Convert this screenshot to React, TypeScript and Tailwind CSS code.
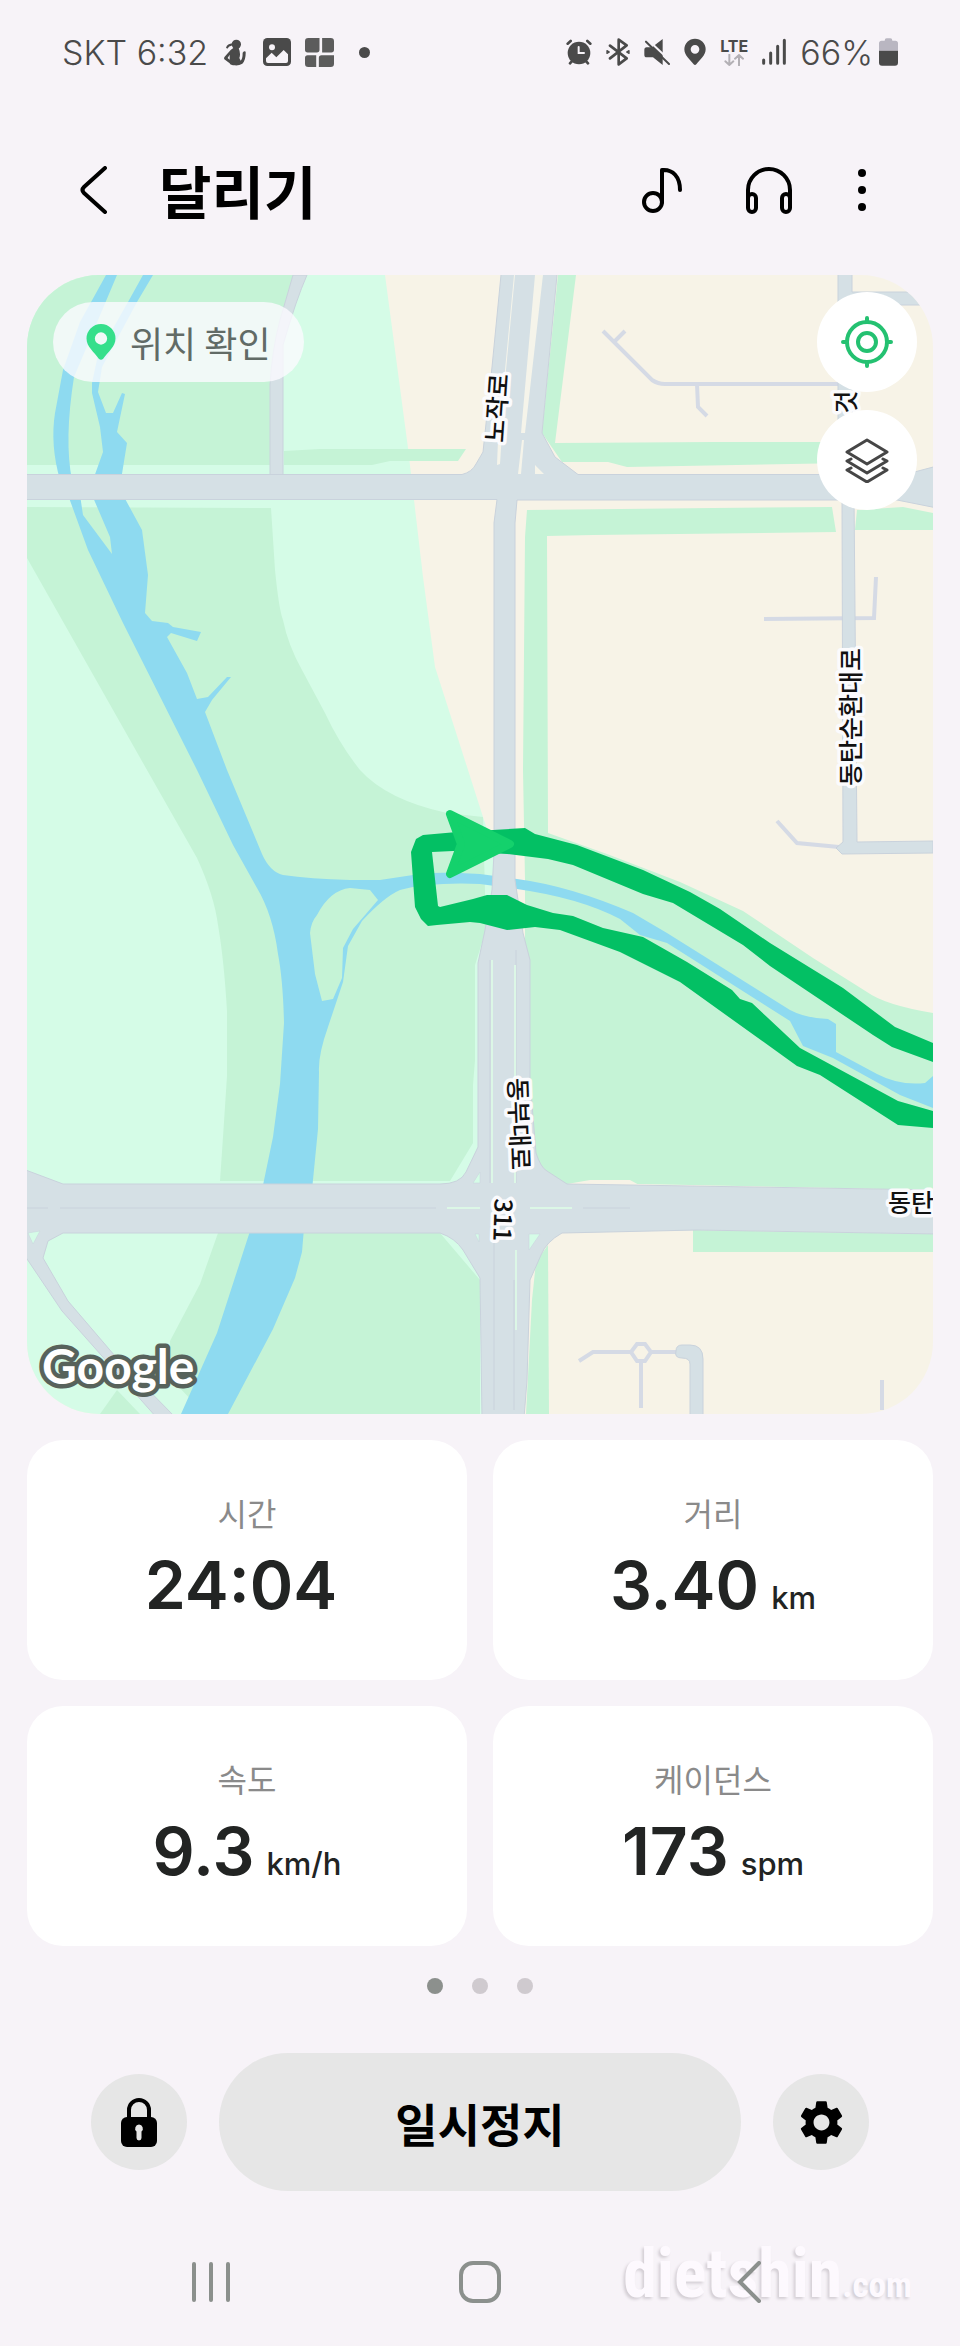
import React from "react";
import { MdSettings } from "react-icons/md";

const stats = [
  { label: "시간", value: "24:04", unit: "" },
  { label: "거리", value: "3.40", unit: "km" },
  { label: "속도", value: "9.3", unit: "km/h" },
  { label: "케이던스", value: "173", unit: "spm" },
];

const roadLabels = [
  { text: "노작로", x: 497, y: 408, angle: -86 },
  { text: "것", x: 846, y: 402, angle: -90 },
  { text: "동탄순환대로", x: 851, y: 717, angle: -90 },
  { text: "동부대로", x: 519, y: 1124, angle: 88 },
  { text: "311", x: 503, y: 1220, angle: 92 },
  { text: "동탄", x: 911, y: 1203, angle: 0 },
];

function StatusBar() {
  return (
    <div className="flex h-[104px] items-center justify-between px-[62px] font-['Inter','Noto_Sans_CJK_KR',sans-serif] text-[34px] font-light text-[#4a4a4a]">
      <div className="flex items-center">
        <span className="mr-4">SKT 6:32</span>
        <svg className="mr-[17px] h-7 w-[22px]" viewBox="0 0 66 84" fill="#4a4a4a">
          <circle cx="37" cy="19" r="14" />
          <path d="M6 29q4-12 20-13l-3 7q-8 0-13 9zM28 30h16q7 18 2 30l4 8q6-6 6-24 5-6 9-3 1 26-10 36-10 6-22 5-14 0-16-6L1 64q-2-4 1-8l18-20zM17 50l-6 10 6 5z" />
        </svg>
        <svg className="mr-[14px] h-7 w-7" viewBox="0 0 84 84">
          <rect width="84" height="84" rx="13" fill="#4a4a4a" />
          <circle cx="27" cy="28" r="9" fill="#f7f3f8" />
          <path d="M9 61 26 44l14 14 22-22 13 13v20q0 6-6 6H15q-6 0-6-6z" fill="#f7f3f8" />
        </svg>
        <svg className="mr-[25px] h-[29px] w-[29px]" viewBox="0 0 88 88" fill="#5c5c5c">
          <path d="M10 0h34v36q0 8-8 8H8q-8 0-8-8V10Q0 0 10 0zM52 0h26q10 0 10 10v26q0 8-8 8H52zM8 52h26v36H10q-10 0-10-10V60q0-8 8-8zM50 52h38v26q0 10-10 10H42V60q0-8 8-8z" />
        </svg>
        <span className="size-[11px] rounded-full bg-[#4a4a4a]" />
      </div>
      <div className="flex items-center gap-[14px]">
        <svg className="h-7 w-[26px]" viewBox="0 0 78 84" fill="none" stroke="#4a4a4a" strokeWidth="8" strokeLinecap="round">
          <circle cx="39" cy="45" r="34" fill="#4a4a4a" stroke="none" />
          <path d="M5 17 14 9M73 17 64 9M12 76l8-9M66 76l-8-9" />
          <path d="M38 27v18h16" stroke="#f7f3f8" strokeWidth="6" />
        </svg>
        <svg className="h-7 w-6" viewBox="0 0 72 84" fill="none" stroke="#4a4a4a" strokeWidth="8" strokeLinecap="round" strokeLinejoin="round">
          <path d="m12 23 50 38-24 18V5l24 17-50 39" />
          <path d="m3 38 7 4-7 4zM69 38l-7 4 7 4z" strokeWidth="4" />
        </svg>
        <svg className="h-7 w-[26px]" viewBox="0 0 78 84">
          <path d="M8 28h16L56 3v78L27 58H8q-7 0-7-8V36q0-8 7-8z" fill="#4a4a4a" />
          <path d="m10 4 70 66" stroke="#f7f3f8" strokeWidth="6" />
          <path d="m6 11 69 67" stroke="#4a4a4a" strokeWidth="6" strokeLinecap="round" />
        </svg>
        <svg className="h-7 w-[22px]" viewBox="0 0 66 84" fill="#4a4a4a" fillRule="evenodd">
          <path d="M33 2a32 32 0 0 1 32 32c0 19-17 30-28 45q-4 4-8 0C18 64 1 53 1 34A32 32 0 0 1 33 2zm0 19a13 13 0 1 0 0 26 13 13 0 0 0 0-26z" />
        </svg>
        <div className="flex w-7 flex-col items-center">
          <span className="text-[16px] leading-4 font-bold">LTE</span>
          <svg className="h-3 w-5" viewBox="0 0 60 36" fill="none" stroke="#b3b0b5" strokeWidth="6" strokeLinecap="round">
            <path d="M16 2v31M4 22l12 11 12-11M45 34V3M33 14 45 3l12 11" />
          </svg>
        </div>
        <svg className="h-7 w-6" viewBox="0 0 72 84" stroke="#4a4a4a" strokeWidth="9" strokeLinecap="round">
          <path d="M5 66v10M26 45v31M47 25v51M67 7v69" />
        </svg>
        <div className="flex items-center gap-[6px]">
          <span>66%</span>
          <svg className="h-7 w-[19px]" viewBox="0 0 57 84">
            <path d="M17 8q0-7 6-7h11q6 0 6 7h9q8 0 8 8v22H0V16q0-8 8-8z" fill="#b9b6c1" />
            <path d="M0 38h57v36q0 9-9 9H9q-9 0-9-9z" fill="#4a4a4a" />
          </svg>
        </div>
      </div>
    </div>
  );
}

function Header() {
  return (
    <header className="flex h-[171px] items-center pr-[92px] pl-20 text-black">
      <button type="button" aria-label="뒤로">
        <svg className="h-12 w-7" viewBox="0 0 28 48" fill="none" stroke="currentColor" strokeWidth="4" strokeLinecap="round">
          <path d="M25 2 4 21q-3 3 0 6l21 19" />
        </svg>
      </button>
      <h1 className="ml-[51px] text-[57px] font-bold">달리기</h1>
      <div className="ml-auto flex items-center gap-16">
        <button type="button" aria-label="음악">
          <svg className="h-12 w-10" viewBox="0 0 40 48" fill="none" stroke="currentColor" strokeWidth="4" strokeLinecap="round" strokeLinejoin="round">
            <circle cx="11" cy="36" r="9" />
            <path d="M20 36V4c11-1 18 7 18 20" />
          </svg>
        </button>
        <button type="button" aria-label="헤드폰">
          <svg className="h-12 w-[46px]" viewBox="0 0 46 48" fill="none" stroke="currentColor" strokeWidth="4" strokeLinecap="round">
            <path d="M2 40V24a21 21 0 0 1 42 0v16" />
            <rect x="2" y="28" width="8" height="18" rx="4" />
            <rect x="36" y="28" width="8" height="18" rx="4" />
          </svg>
        </button>
        <button type="button" aria-label="더보기">
          <svg className="h-12 w-3" viewBox="0 0 12 48" fill="currentColor">
            <circle cx="6" cy="7" r="4" />
            <circle cx="6" cy="24" r="4" />
            <circle cx="6" cy="41" r="4" />
          </svg>
        </button>
      </div>
    </header>
  );
}

function RouteMap() {
  return (
    <svg className="block w-full" viewBox="27 275 906 1139" role="img" aria-label="지도">
      <rect x="27" y="275" width="906" height="1139" fill="#f7f3e7" />

      {/* parks */}
      <path fill="#d5fce7" d="M27 275H385L408 448 414 500 423 577 435 667 468 770 483 817 494 850V1414H27z" />
      <g fill="#c5f3d6">
        <path d="M27 275H300L270 380V465H27z" />
        <path d="M284 451 320 449H466L458 461H390L372 465H284z" />
        <path d="M27 507 271 508 275 570Q279 610 283 620 288 645 302 670L325 713Q340 745 360 770 387 800 447 813L483 817 486 930 475 965V1060L473 1085V1143L450 1181H220L223 1137 227 1076V1011Q224 960 218 925 214 895 197 858L147 770 27 558z" />
        <path d="M218 1233H440L480 1280V1414H205L170 1378V1341L200 1284z" />
        <path d="M100 1414 117 1390 140 1414z" />
        <path d="M558 275H576L555 443 713 442H850V463L627 467 608 462H562L542 433z" />
        <path d="M527 510 713 508 832 507 836 532 593 535 547 536 548 833 607 854 680 882 743 911 813 958 867 992Q885 1005 933 1013V1190L640 1184 525 1184V880L523 770 525 537z" />
        <path d="M857 510 903 507 933 513V530H855z" />
        <path d="M693 1230 933 1234V1252H693z" />
        <path d="M548 1245 549 1414H526L532 1300 536 1262z" />
      </g>
      <path fill="#f7f3e7" d="M567 1184 590 1180H630L641 1186z" />

      {/* river */}
      <g fill="#8edaf0">
        <path d="M106 275H117L74 377Q64 440 72 480H60Q50 445 55 413L63 370 80 322z" />
        <path d="M143 275H153L137 302 102 367 98 392 106 413H113L122 393 125 394 117 432 127 443 121 480H93L103 452 100 427 92 393V383L98 355 128 302z" />
        <path d="M68 495H80L83 515 112 554 110 537 92 495H123L142 530 148 575 145 613 152 621 168 623 173 627 201 632 197 641 171 633 167 637 187 673 197 699 208 697 227 677H231L212 700 205 712 227 770 262 854Q270 872 283 875 310 879 350 880H380L413 875Q430 871 480 874L517 879Q570 886 633 913L667 933 790 1010Q805 1018 828 1019L836 1024V1052L877 1074Q900 1086 925 1083L933 1076V1108L900 1095 833 1058 803 1046 790 1021 667 943 640 935 620 919Q580 898 517 889L480 884Q430 882 400 890 384 897 362 921L348 946 343 982 328 1027Q318 1055 319 1072L318 1129 312 1190H262L273 1137 280 1084 284 1023Q283 980 278 954 273 915 257 888L233 845 197 770 123 623 88 550z" />
        <path d="M251 1228H304L302 1252 295 1278 273 1329 228 1414H181L217 1333z" />
      </g>
      <path fill="#c5f3d6" d="M310 933Q311 922 317 915 330 890 350 888L370 890 378 900 353 929 343 948 342 978 333 999 322 1001 315 974z" />

      {/* small lanes */}
      <g fill="none" stroke="#d5dae5" strokeWidth="4">
        <path d="m603 331 49 49q6 4 13 4h175M625 331l-11 11M697 384l1 23 9 9" />
        <path d="m764 619 110-1 2-41M777 821l20 22 42 4" />
        <path d="m579 1361 14-9h39M650 1352h30M641 1362v46M882 1380v30" />
        <path fill="#f7f3e7" d="m637 1344 8 0 6 8-6 9h-8l-6-9z" />
      </g>

      {/* roads */}
      <g fill="#d5e0e5" stroke="#c9d2dc">
        <path d="M293 275H307Q296 300 283 345V476H270V385Q272 350 280 320z" />
        <path d="M838 270H852V292H933V305H854V476H838zM842 495H854L857 842 933 841V853L842 854 836 848 843 842z" />
        <path d="M676 1351q0-6 6-6h8q13 0 13 14v60H690v-55q0-6-8-6t-6-7z" />
        <path d="M23 474.500H462Q472 472 476 464L483 452 492 367 501 275V270H557V275L542 433 555 457 578 474.500H905L937 466V508L897 500H517L515 523V880L523 933 530 960V1080L536 1153Q541 1168 547 1171L567 1184 937 1190V1234L697 1230 562 1233Q546 1242 541 1255L530 1280 527 1380 524 1418H482L480 1278 463 1250Q455 1238 440 1233H63L48 1241 43 1258 68 1301 115 1356 176 1418H157L62 1311 23 1253V1169L63 1184H440Q460 1184 466 1172L478 1147V963L485 930 492 890 494 853V523L497 499.500H23z" />
      </g>
      <g fill="#f5f4ea">
        <path d="M514 275h1l-9 95-6 94-3 1 1-25 7-70zM535 275h8l-18 158h-4zM522 440h2l-3 34h-3zM535 465l9 9h-9z" />
        <path d="M529 1234h11l-11 16zM473 1183l7-11v11zM475 1234h4v8zM28 1233l5 11 7-13z" fill="#d5fce7" stroke="#c9d2dc" strokeWidth=".5" />
      </g>
      <g fill="none" stroke="#c9d2dc">
        <path d="M27 1208H48M60 1208H436M583 1208H630M494 1240V1410M514 1280V1410M516 950V1183M490 960V1183" />
        <path d="M492 960V1183M515 965V1183M516 1250V1330M447 1208H480M530 1208H572" stroke="#dcf7e6" strokeWidth="2" />
      </g>

      {/* run track */}
      <path
        fill="#03c064"
        d="M457 832 423 835 416 839 411 852 415 907 421 919 428 926 437 925 470 922 480 923 507 930 535 927 560 930 620 952 680 982 797 1066 820 1075 898 1125 933 1128V1111L898 1101 800 1048 752 1003 740 999 732 990 687 962 643 937 603 928 573 916 553 913 527 905 507 895H487L473 899 440 907 438 906 432 852 453 851 507 854 548 859 573 865 643 894 673 903 743 945 770 966 873 1035 892 1047 933 1062V1043L895 1027 843 988 770 943 720 909 690 892 643 870 577 845 535 834 525 828 493 830z"
      />
      <path d="m450 814 60 30-60 30 11-30z" fill="#14d16c" stroke="#14d16c" strokeWidth="8" strokeLinejoin="round" />

      {/* names */}
      <g className="font-['Noto_Sans_CJK_KR',sans-serif] text-[25px] font-medium" fill="#111" stroke="#fbfbfd" strokeWidth="7" strokeLinejoin="round" paintOrder="stroke" textAnchor="middle">
        {roadLabels.map((label) => (
          <text key={label.text} dy="9" transform={`translate(${label.x} ${label.y}) rotate(${label.angle})`}>
            {label.text}
          </text>
        ))}
      </g>
      <text x="42" y="1384" className="font-['Lato',sans-serif] text-[48px] font-bold" fill="#fff" stroke="#57625b" strokeWidth="9" strokeLinejoin="round" paintOrder="stroke">
        Google
      </text>
    </svg>
  );
}

function MapPanel() {
  return (
    <section className="relative overflow-hidden rounded-[72px]">
      <RouteMap />
      <button type="button" className="absolute top-[27px] left-[26px] flex h-20 items-center gap-[14px] rounded-full bg-[#fbfaff]/80 px-[33px] text-[36px] text-[#616b66]">
        <svg className="h-9 w-[30px]" viewBox="0 0 66 82" fill="#35df8b" fillRule="evenodd">
          <path d="M33 0a33 33 0 0 1 33 33c0 19-17 30-28 46q-5 5-10 0C17 63 0 52 0 33A33 33 0 0 1 33 0zm0 19a14 14 0 1 0 0 28 14 14 0 0 0 0-28z" />
        </svg>
        위치 확인
      </button>
      <div className="absolute top-[17px] right-4 flex flex-col gap-[18px]">
        <button type="button" aria-label="현재 위치" className="flex size-[100px] items-center justify-center rounded-full bg-white">
          <svg className="size-[52px]" viewBox="0 0 52 52" fill="none" stroke="#24c171" strokeWidth="4" strokeLinecap="round">
            <circle cx="26" cy="26" r="20" />
            <circle cx="26" cy="26" r="9" />
            <path d="M26 2v4M26 46v4M2 26h4M46 26h4" />
          </svg>
        </button>
        <button type="button" aria-label="지도 레이어" className="flex size-[100px] items-center justify-center rounded-full bg-white">
          <svg className="h-[46px] w-11" viewBox="0 0 44 46" fill="none" stroke="#464646" strokeWidth="3" strokeLinejoin="round" strokeLinecap="round">
            <path d="m22 3 20 12-20 12L2 15z" />
            <path d="m6 22-4 2 20 12 20-12-4-2M6 31l-4 2 20 12 20-12-4-2" />
          </svg>
        </button>
      </div>
    </section>
  );
}

function StatCard({ label, value, unit }: { label: string; value: string; unit: string }) {
  return (
    <div className="flex h-60 flex-col items-center rounded-[36px] bg-white pt-12">
      <div className="text-[32px] leading-[48px] text-[#8a8a8a]">{label}</div>
      <div className="flex items-baseline gap-3 font-['Inter','Noto_Sans_CJK_KR',sans-serif] text-[#222423]">
        <span className="text-[66px] leading-[98px] font-semibold">{value}</span>
        <span className="text-[31px] font-medium">{unit}</span>
      </div>
    </div>
  );
}

export default function App() {
  return (
    <div className="relative min-h-screen bg-[#f7f3f8] font-['Noto_Sans_CJK_KR',sans-serif]">
      <StatusBar />
      <Header />
      <main className="px-[27px]">
        <MapPanel />
        <div className="mt-[26px] grid grid-cols-2 gap-[26px]">
          {stats.map((stat) => (
            <StatCard key={stat.label} {...stat} />
          ))}
        </div>
        <div className="mt-8 flex justify-center gap-[29px]">
          <span className="size-4 rounded-full bg-[#8c908d]" />
          <span className="size-4 rounded-full bg-[#cfcacf]" />
          <span className="size-4 rounded-full bg-[#cfcacf]" />
        </div>
        <div className="mt-[59px] flex items-center gap-8 px-16">
          <button type="button" aria-label="잠금" className="flex size-24 shrink-0 items-center justify-center rounded-full bg-[#e6e6e6]">
            <svg className="h-[50px] w-9" viewBox="0 0 36 50">
              <path d="M8 22V13a10 10 0 0 1 20 0v9" fill="none" stroke="#000" strokeWidth="4" />
              <rect y="20" width="36" height="30" rx="6" />
              <path d="M18 27.500a4 4 0 0 1 2.500 7V41a2.500 2.500 0 0 1-5 0v-6.500a4 4 0 0 1 2.500-7z" fill="#e6e6e6" />
            </svg>
          </button>
          <button type="button" className="h-[138px] flex-1 rounded-full bg-[#e6e6e6] text-[46px] font-bold text-black">
            일시정지
          </button>
          <button type="button" aria-label="설정" className="flex size-24 shrink-0 items-center justify-center rounded-full bg-[#e6e6e6] text-black">
            <MdSettings className="size-[53px]" />
          </button>
        </div>
      </main>

      <div className="absolute right-12 bottom-8 font-['Roboto_Condensed','Roboto',sans-serif] font-bold text-[#fdf9fe] [text-shadow:-2px_2px_3px_#d3ced4]">
        <span className="text-[68px] leading-[80px]">dietshin</span>
        <span className="text-[35px]">.com</span>
      </div>

      <nav className="relative flex px-[76px] pt-[70px] pb-[43px] text-[#8b908d]">
        <button type="button" aria-label="최근 앱" className="flex flex-1 justify-center">
          <svg className="h-[42px] w-[42px]" viewBox="0 0 42 42" stroke="currentColor" strokeWidth="4" strokeLinecap="round">
            <path d="M4 3v36M21 3v36M38 3v36" />
          </svg>
        </button>
        <button type="button" aria-label="홈" className="flex flex-1 justify-center">
          <svg className="h-[42px] w-[42px]" viewBox="0 0 42 42" fill="none" stroke="currentColor" strokeWidth="4">
            <rect x="2" y="2" width="38" height="38" rx="12" />
          </svg>
        </button>
        <button type="button" aria-label="뒤로 가기" className="flex flex-1 justify-center">
          <svg className="h-[42px] w-[42px]" viewBox="0 0 42 42" fill="none" stroke="currentColor" strokeWidth="4" strokeLinecap="round">
            <path d="M31 2 12 21l19 19" />
          </svg>
        </button>
      </nav>
    </div>
  );
}
